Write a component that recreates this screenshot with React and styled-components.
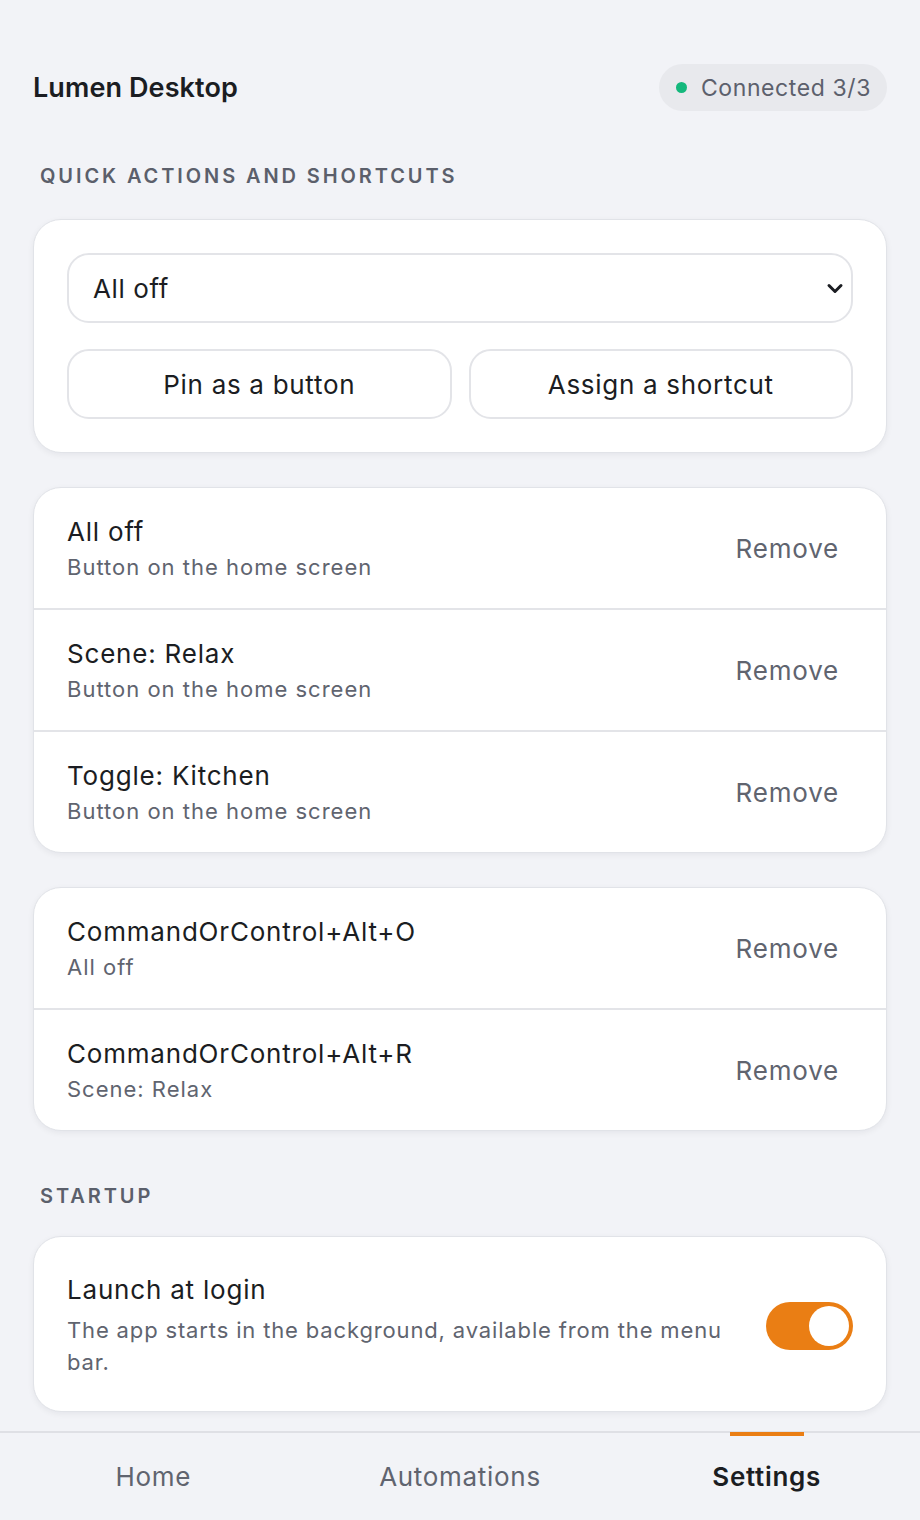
import React, { useState } from 'react'
import styled, { createGlobalStyle } from 'styled-components'

const GlobalStyle = createGlobalStyle`
  html, body {
    margin: 0;
    padding: 0;
    background: #f2f3f7;
  }
  body {
    font-family: Inter, "Noto Sans", sans-serif;
    color: #1b1d22;
  }
  * {
    box-sizing: border-box;
  }
`

const Shell = styled.div`
  display: flex;
  flex-direction: column;
  height: 1520px;
  overflow: hidden;
`

const Main = styled.main`
  flex: 1;
  overflow: hidden;
  padding: 64px 33px 0;
`

const Header = styled.header`
  display: flex;
  align-items: center;
  justify-content: space-between;
  height: 47px;
`

const AppTitle = styled.h1`
  margin: 0;
  font-size: 27px;
  font-weight: 600;
  letter-spacing: 0.1px;
`

const StatusPill = styled.div`
  display: flex;
  align-items: center;
  gap: 14px;
  height: 47px;
  padding: 0 16px 0 17px;
  border-radius: 24px;
  background: #e8e9ed;
  color: #5c606c;
  font-size: 23px;
  letter-spacing: 0.6px;
`

const Dot = styled.span`
  width: 11px;
  height: 11px;
  border-radius: 50%;
  background: #14b87c;
`

const SectionLabel = styled.h2`
  margin: ${({ $top }) => $top}px 0 ${({ $bottom }) => $bottom}px;
  padding-left: 7px;
  font-size: 20px;
  line-height: 24px;
  font-weight: 600;
  letter-spacing: 2.9px;
  text-transform: uppercase;
  color: #5b5f6b;
`

const Card = styled.section`
  background: #fff;
  border: 1px solid #e1e3e8;
  border-radius: 28px;
  box-shadow: 0 2px 6px rgba(20, 24, 40, 0.06);
  margin-bottom: 34px;
  padding: ${({ $pad }) => $pad || '0'};
  overflow: hidden;
`

const SelectWrap = styled.div`
  position: relative;
`

const Select = styled.select`
  appearance: none;
  width: 100%;
  height: 70px;
  padding: 0 60px 0 24px;
  border: 2px solid #e3e4e8;
  border-radius: 22px;
  background: #fff;
  font-family: inherit;
  font-size: 26px;
  letter-spacing: 0.6px;
  color: #1b1d22;
  outline: none;
`

const Chevron = styled.svg`
  position: absolute;
  right: 8px;
  top: 50%;
  width: 20px;
  height: 20px;
  transform: translateY(-50%);
  pointer-events: none;
`

const ButtonRow = styled.div`
  display: grid;
  grid-template-columns: 1fr 1fr;
  gap: 17px;
  margin-top: 26px;
`

const OutlineButton = styled.button`
  height: 70px;
  border: 2px solid #e3e4e8;
  border-radius: 22px;
  background: #fff;
  font-family: inherit;
  font-size: 26px;
  letter-spacing: 0.7px;
  color: #1b1d22;
  cursor: pointer;
`

const Row = styled.div`
  display: flex;
  align-items: center;
  justify-content: space-between;
  height: ${({ $first }) => ($first ? '120px' : '122px')};
  padding: 0 31px 0 33px;
  border-top: ${({ $first }) => ($first ? 'none' : '2px solid #e3e4e8')};
`

const RowText = styled.div`
  display: flex;
  flex-direction: column;
  gap: 3px;
`

const RowTitle = styled.div`
  font-size: 26px;
  line-height: 34px;
  letter-spacing: 0.8px;
`

const RowSub = styled.div`
  font-size: 22px;
  line-height: 30px;
  letter-spacing: 1px;
  color: #60646f;
`

const TextButton = styled.button`
  border: none;
  background: none;
  padding: 8px 16px;
  font-family: inherit;
  font-size: 26px;
  letter-spacing: 0.8px;
  color: #60646f;
  cursor: pointer;
`

const SettingRow = styled.div`
  display: flex;
  align-items: center;
  justify-content: space-between;
  gap: 30px;
  padding: 36px 33px 33px;
`

const SettingText = styled.div`
  display: flex;
  flex-direction: column;
  gap: 7px;
`

const SettingDesc = styled.div`
  font-size: 22px;
  line-height: 32px;
  letter-spacing: 0.85px;
  color: #60646f;
`

const Toggle = styled.button`
  flex: none;
  position: relative;
  width: 87px;
  height: 48px;
  border: none;
  border-radius: 24px;
  padding: 0;
  background: ${({ $on }) => ($on ? '#ea7e14' : '#d4d6dc')};
  cursor: pointer;
`

const Knob = styled.span`
  position: absolute;
  top: 4px;
  left: ${({ $on }) => ($on ? '43px' : '4px')};
  width: 40px;
  height: 40px;
  border-radius: 50%;
  background: #fff;
`

const Nav = styled.nav`
  flex: none;
  display: grid;
  grid-template-columns: repeat(3, 1fr);
  height: 89px;
  border-top: 2px solid #dfe0e5;
  background: #f2f3f7;
`

const Tab = styled.button`
  position: relative;
  border: none;
  background: none;
  font-family: inherit;
  font-size: 26px;
  letter-spacing: 0.7px;
  font-weight: ${({ $active }) => ($active ? 600 : 400)};
  color: ${({ $active }) => ($active ? '#1b1d22' : '#60646f')};
  cursor: pointer;

  &::before {
    content: '';
    display: ${({ $active }) => ($active ? 'block' : 'none')};
    position: absolute;
    top: -1px;
    left: 50%;
    width: 74px;
    height: 4px;
    transform: translateX(-50%);
    background: #ea7e14;
  }
`

const pinned = [
  { title: 'All off', sub: 'Button on the home screen' },
  { title: 'Scene: Relax', sub: 'Button on the home screen' },
  { title: 'Toggle: Kitchen', sub: 'Button on the home screen' },
]

const shortcuts = [
  { title: 'CommandOrControl+Alt+O', sub: 'All off' },
  { title: 'CommandOrControl+Alt+R', sub: 'Scene: Relax' },
]

const ItemList = ({ items }) => (
  <Card>
    {items.map((item, i) => (
      <Row key={item.title} $first={i === 0}>
        <RowText>
          <RowTitle>{item.title}</RowTitle>
          <RowSub>{item.sub}</RowSub>
        </RowText>
        <TextButton>Remove</TextButton>
      </Row>
    ))}
  </Card>
)

const App = () => {
  const [launch, setLaunch] = useState(true)
  const [tab, setTab] = useState('Settings')

  return (
    <Shell>
      <GlobalStyle />
      <Main>
        <Header>
          <AppTitle>Lumen Desktop</AppTitle>
          <StatusPill>
            <Dot />
            Connected 3/3
          </StatusPill>
        </Header>

        <SectionLabel $top={53} $bottom={31}>
          Quick actions and shortcuts
        </SectionLabel>
        <Card $pad="33px 33px">
          <SelectWrap>
            <Select defaultValue="all-off">
              <option value="all-off">All off</option>
              <option value="relax">Scene: Relax</option>
              <option value="kitchen">Toggle: Kitchen</option>
            </Select>
            <Chevron viewBox="0 0 20 20">
              <path
                d="M4 7.5 L10 13.5 L16 7.5"
                fill="none"
                stroke="#1b1d22"
                strokeWidth="3"
                strokeLinecap="round"
                strokeLinejoin="round"
              />
            </Chevron>
          </SelectWrap>
          <ButtonRow>
            <OutlineButton>Pin as a button</OutlineButton>
            <OutlineButton>Assign a shortcut</OutlineButton>
          </ButtonRow>
        </Card>

        <ItemList items={pinned} />
        <ItemList items={shortcuts} />

        <SectionLabel $top={53} $bottom={28}>
          Startup
        </SectionLabel>
        <Card>
          <SettingRow>
            <SettingText>
              <RowTitle>Launch at login</RowTitle>
              <SettingDesc>
                The app starts in the background, available from the menu bar.
              </SettingDesc>
            </SettingText>
            <Toggle $on={launch} onClick={() => setLaunch(!launch)}>
              <Knob $on={launch} />
            </Toggle>
          </SettingRow>
        </Card>
      </Main>

      <Nav>
        {['Home', 'Automations', 'Settings'].map(name => (
          <Tab key={name} $active={tab === name} onClick={() => setTab(name)}>
            {name}
          </Tab>
        ))}
      </Nav>
    </Shell>
  )
}

export default App
